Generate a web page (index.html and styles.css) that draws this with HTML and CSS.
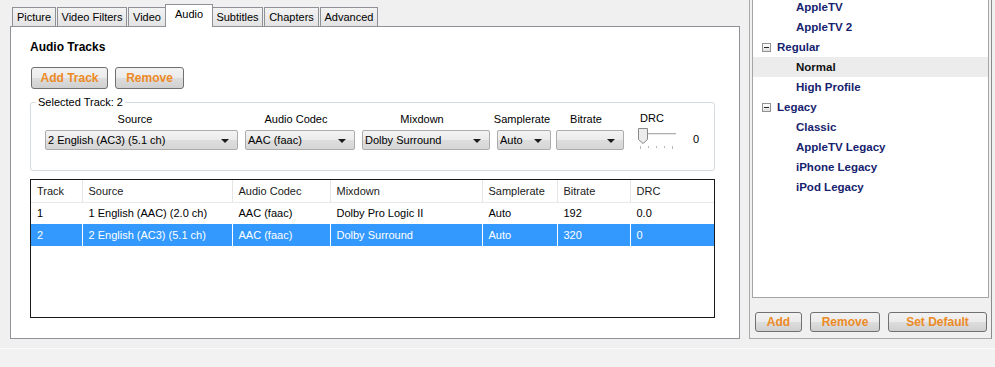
FILE: index.html
```html
<!DOCTYPE html>
<html>
<head>
<meta charset="utf-8">
<link rel="stylesheet" href="styles.css">
</head>
<body>
<div class="window">
  <div class="main">
    <div class="left">
      <div class="tabs">
        <div class="tab t-picture">Picture</div>
        <div class="tab t-filters">Video Filters</div>
        <div class="tab t-video">Video</div>
        <div class="tab t-audio active">Audio</div>
        <div class="tab t-subs">Subtitles</div>
        <div class="tab t-chapters">Chapters</div>
        <div class="tab t-adv">Advanced</div>
      </div>
      <div class="tabpanel">
        <div class="section-title">Audio Tracks</div>
        <div class="btnrow">
          <button class="btn btn-addtrack">Add Track</button>
          <button class="btn btn-remove">Remove</button>
        </div>
        <fieldset class="group">
          <legend>Selected Track: 2</legend>
          <div class="controls">
            <div class="ctl c-source">
              <div class="lbl">Source</div>
              <div class="combo"><span class="combo-text">2 English (AC3) (5.1 ch)</span><span class="arrow"></span></div>
            </div>
            <div class="ctl c-codec">
              <div class="lbl">Audio Codec</div>
              <div class="combo"><span class="combo-text">AAC (faac)</span><span class="arrow"></span></div>
            </div>
            <div class="ctl c-mix">
              <div class="lbl">Mixdown</div>
              <div class="combo"><span class="combo-text">Dolby Surround</span><span class="arrow"></span></div>
            </div>
            <div class="ctl c-rate">
              <div class="lbl">Samplerate</div>
              <div class="combo"><span class="combo-text">Auto</span><span class="arrow"></span></div>
            </div>
            <div class="ctl c-bitrate">
              <div class="lbl">Bitrate</div>
              <div class="combo"><span class="combo-text"></span><span class="arrow"></span></div>
            </div>
            <div class="ctl c-drc">
              <div class="lbl lbl-drc">DRC</div>
              <svg class="slider" width="42" height="22" viewBox="0 0 42 22">
                <line x1="10" y1="5.5" x2="40" y2="5.5" stroke="#b0b0b0" stroke-width="1"/>
                <line x1="10" y1="6.5" x2="40" y2="6.5" stroke="#e8e8e8" stroke-width="1"/>
                <path d="M2.5 0.5 H11.5 V11.5 L7 15.5 L2.5 11.5 Z" fill="#ececec" stroke="#8a8a8a"/>
                <g stroke="#b8b8b8">
                  <line x1="4.5" y1="18" x2="4.5" y2="21"/>
                  <line x1="12.5" y1="18" x2="12.5" y2="20"/>
                  <line x1="20.5" y1="18" x2="20.5" y2="20"/>
                  <line x1="28.5" y1="18" x2="28.5" y2="20"/>
                  <line x1="36.5" y1="18" x2="36.5" y2="21"/>
                </g>
              </svg>
            </div>
            <div class="drc-value">0</div>
          </div>
        </fieldset>
        <div class="tracks-box">
          <table class="tracks">
            <colgroup>
              <col class="w-track"><col class="w-source"><col class="w-codec"><col class="w-mix"><col class="w-rate"><col class="w-bitrate"><col class="w-drc">
            </colgroup>
            <thead>
              <tr><th>Track</th><th>Source</th><th>Audio Codec</th><th>Mixdown</th><th>Samplerate</th><th>Bitrate</th><th>DRC</th></tr>
            </thead>
            <tbody>
              <tr><td>1</td><td>1 English (AAC) (2.0 ch)</td><td>AAC (faac)</td><td>Dolby Pro Logic II</td><td>Auto</td><td>192</td><td>0.0</td></tr>
              <tr class="selected"><td>2</td><td>2 English (AC3) (5.1 ch)</td><td>AAC (faac)</td><td>Dolby Surround</td><td>Auto</td><td>320</td><td>0</td></tr>
            </tbody>
          </table>
        </div>
      </div>
    </div>
    <div class="right">
      <div class="presets-panel">
        <div class="presets">
          <ul class="tree">
            <li class="item">AppleTV</li>
            <li class="item">AppleTV 2</li>
            <li class="group-item"><span class="minus"></span>Regular</li>
            <li class="item current">Normal</li>
            <li class="item">High Profile</li>
            <li class="group-item"><span class="minus"></span>Legacy</li>
            <li class="item">Classic</li>
            <li class="item">AppleTV Legacy</li>
            <li class="item">iPhone Legacy</li>
            <li class="item">iPod Legacy</li>
          </ul>
        </div>
        <div class="preset-btns">
          <button class="btn pbtn p-add">Add</button>
          <button class="btn pbtn p-remove">Remove</button>
          <button class="btn pbtn p-default">Set Default</button>
        </div>
      </div>
    </div>
  </div>
  <div class="status"></div>
</div>
</body>
</html>
```

FILE: styles.css
```css
* { box-sizing: border-box; }

html, body {
  margin: 0;
  padding: 0;
}

body {
  width: 995px;
  height: 367px;
  overflow: hidden;
  background: #f0f0f0;
  font-family: "Liberation Sans", Arial, sans-serif;
  font-size: 11px;
  color: #000;
}

.window {
  width: 995px;
  height: 367px;
  display: flex;
  flex-direction: column;
}

.main {
  height: 348px;
  display: flex;
  flex: none;
}

.status {
  flex: 1;
  background: #f2f2f2;
  border-top: 1px solid #fbfbfb;
}

/* ---------- left side ---------- */
.left {
  width: 748px;
  padding: 5px 0 0 10px;
  flex: none;
}

.tabs {
  display: flex;
  align-items: flex-end;
  height: 21px;
  padding-left: 2px;
  gap: 1px;
  position: relative;
  z-index: 1;
}

.tab {
  height: 19px;
  border: 1px solid #8e9196;
  border-bottom: none;
  background: linear-gradient(#f3f3f3, #e3e3e3);
  text-align: center;
  line-height: 18px;
  white-space: nowrap;
}

.tab.active {
  height: 23px;
  margin-bottom: -1px;
  margin-left: -2px;
  margin-right: -2px;
  background: #fff;
  line-height: 19px;
  padding-bottom: 2px;
}

.t-picture { width: 44px; }
.t-filters { width: 70px; }
.t-video { width: 38px; }
.t-audio { width: 48px; }
.t-subs { width: 51px; }
.t-chapters { width: 55px; }
.t-adv { width: 58px; }

.tabpanel {
  width: 730px;
  height: 313px;
  border: 1px solid #8e9196;
  background: #fff;
  padding: 13px 0 0 19px;
}

.section-title {
  font-weight: bold;
  font-size: 12px;
  line-height: 14px;
}

.btnrow {
  display: flex;
  gap: 7px;
  margin-top: 13px;
  margin-left: 1px;
}

.btn {
  font-family: "Liberation Sans", Arial, sans-serif;
  font-weight: bold;
  font-size: 12px;
  color: #ec8a26;
  border: 1px solid #707070;
  border-radius: 3px;
  background: linear-gradient(#f2f2f2 0%, #ebebeb 48%, #dddddd 52%, #cfcfcf 100%);
  padding: 0;
  margin: 0;
  height: 22px;
  text-align: center;
  line-height: 18px;
}

.btn-addtrack { width: 77px; }
.btn-remove { width: 69px; }

/* group box */
.group {
  margin: 7px 0 0 0;
  width: 685px;
  border: 1px solid #d5dbe0;
  border-radius: 3px;
  padding: 3px 0 20px 14px;
}

.group legend {
  margin-left: -9px;
  padding: 0 2px;
  line-height: 13px;
  font-size: 11px;
}

.controls {
  display: flex;
  align-items: flex-end;
}

.ctl {
  display: flex;
  flex-direction: column;
  flex: none;
}

.lbl {
  text-align: center;
  line-height: 13px;
  height: 13px;
  margin-bottom: 4px;
  padding-right: 8px;
  white-space: nowrap;
}

.c-source { width: 193px; }
.c-codec { width: 110px; margin-left: 7px; }
.c-mix { width: 128px; margin-left: 7px; }
.c-rate { width: 54px; margin-left: 7px; }
.c-bitrate { width: 68px; margin-left: 5px; }
.c-drc { width: 42px; margin-left: 12px; }
.c-source .lbl { padding-right: 13px; }
.c-rate .lbl { padding-right: 4px; margin-left: -10px; margin-right: -10px; }
.lbl-drc { text-align: left; padding-left: 4px; margin-bottom: 3px; }

.slider {
  display: block;
  margin-bottom: 0;
}

.drc-value {
  margin-left: 15px;
  line-height: 13px;
  margin-bottom: 4px;
}

.combo {
  height: 20px;
  border: 1px solid #acacac;
  border-radius: 2px;
  background: linear-gradient(#f3f3f3 0%, #ebebeb 50%, #dddddd 51%, #d6d6d6 100%);
  display: flex;
  align-items: center;
  padding-left: 2px;
  padding-right: 8px;
}

.combo-text {
  flex: 1;
  white-space: nowrap;
  overflow: hidden;
  line-height: 16px;
}

.arrow {
  width: 0;
  height: 0;
  border-left: 4px solid transparent;
  border-right: 4px solid transparent;
  border-top: 4px solid #1b1b1b;
  margin-top: 1px;
}

/* tracks table */
.tracks-box {
  margin-top: 8px;
  width: 685px;
  height: 139px;
  border: 1px solid #1a1a1a;
  background: #fff;
}

.tracks {
  border-collapse: collapse;
  table-layout: fixed;
  width: 683px;
}

.w-track { width: 51px; }
.w-source { width: 150px; }
.w-codec { width: 98px; }
.w-mix { width: 152px; }
.w-rate { width: 75px; }
.w-bitrate { width: 73px; }
.w-drc { width: 84px; }

.tracks th,
.tracks td {
  height: 22px;
  padding: 0 0 0 6px;
  text-align: left;
  font-weight: normal;
  white-space: nowrap;
  overflow: hidden;
}

.tracks th {
  border-right: 1px solid #e5e5e5;
  border-bottom: 1px solid #e8e8e8;
  color: #1a1a1a;
}

.tracks td {
  border-right: 1px solid #fff;
}

.tracks th:last-child,
.tracks td:last-child {
  border-right: none;
}

.tracks tr.selected td {
  background: #3399ff;
  color: #fff;
}

/* ---------- right side ---------- */
.right {
  flex: none;
  width: 247px;
  padding-left: 1px;
}

.presets-panel {
  width: 243px;
  height: 341px;
  margin-top: -2px;
  border: 1px solid #a9a9a9;
  border-right-color: #8a8a8a;
  background: #f0f0f0;
  padding: 0 0 0 2px;
  display: flex;
  flex-direction: column;
}

.presets {
  width: 237px;
  height: 299px;
  border: 1px solid #a5a5a5;
  background: #fff;
  overflow: hidden;
}

.tree {
  list-style: none;
  margin: -3px 0 0 0;
  padding: 0;
}

.tree li {
  height: 20px;
  line-height: 20px;
  font-weight: bold;
  font-size: 11.5px;
  color: #16226e;
  white-space: nowrap;
}

.tree .item {
  padding-left: 43px;
}

.tree .current {
  background: #ececec;
  color: #111;
}

.tree .group-item {
  display: flex;
  align-items: center;
  padding-left: 9px;
}

.minus {
  width: 9px;
  height: 9px;
  border: 1px solid #929292;
  background: linear-gradient(#ffffff, #dedede);
  margin-right: 6px;
  position: relative;
  flex: none;
}

.minus::after {
  content: "";
  position: absolute;
  left: 1px;
  top: 3px;
  width: 5px;
  height: 1px;
  background: #2a2a2a;
}

.preset-btns {
  display: flex;
  margin-top: 14px;
  padding-left: 3px;
}

.pbtn {
  height: 20px;
  line-height: 17px;
}

.p-add { width: 47px; }
.p-remove { width: 70px; margin-left: 8px; }
.p-default { width: 99px; margin-left: 8px; }
```
